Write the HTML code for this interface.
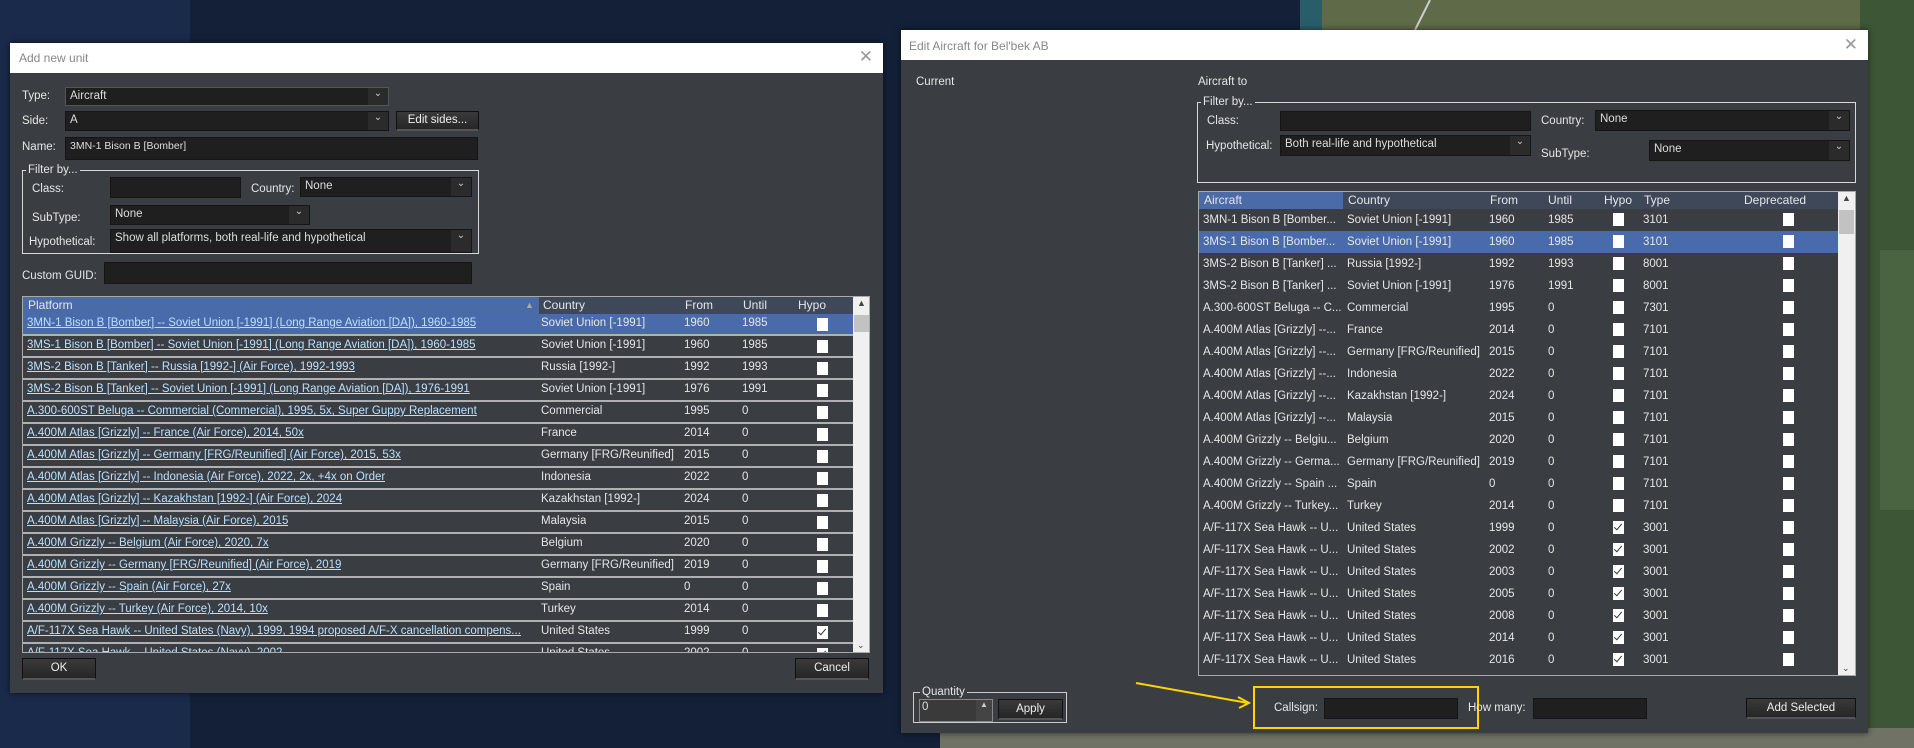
<!DOCTYPE html>
<html><head><meta charset="utf-8">
<style>
*{box-sizing:border-box;margin:0;padding:0}
body{width:1914px;height:748px;overflow:hidden;position:relative;font-family:"Liberation Sans",sans-serif;font-size:12px;color:#e6e6e6;background:#132038}
.a{position:absolute}
.dlg{position:absolute;background:#3a3d41;box-shadow:0 0 6px rgba(0,0,0,.6)}
.tb{position:absolute;left:0;top:0;right:0;background:#fff;color:#888;font-size:12px}
.fld{position:absolute;background:#1f1f1f;border:1px solid #151515;color:#ddd;padding:2px 4px;font-size:11.5px;white-space:nowrap;overflow:hidden}
.cmb .arr{position:absolute;right:0;top:0;bottom:0;width:20px;background:#2b2b2b;color:#ccc;font-size:10px;text-align:center}
.btn{position:absolute;background:linear-gradient(#3a3a3a,#262626);border:1px solid #111;border-bottom:2px solid #555;color:#eee;text-align:center;font-size:11.5px}
.grp{position:absolute;border:1px solid #d8d8d8}
.grp .lg{position:absolute;top:-8px;left:3px;background:#3a3d41;padding:0 2px;font-size:11.5px;line-height:14px}
.lbl{position:absolute;font-size:11.5px;white-space:nowrap}
.row{position:absolute;left:0;height:22px;line-height:22px;white-space:nowrap;font-size:11.5px}
.cell{position:absolute;top:0;overflow:hidden;white-space:nowrap}
.lt .row{border-bottom:2px solid #b0b0b0;line-height:19px}
.lt .c0{color:#b9e0ff;text-decoration:underline}
.cb{position:absolute;width:11px;height:13px;background:#fff}
.cb.k::after{content:"";position:absolute;left:3px;top:1px;width:3px;height:7px;border:solid #333;border-width:0 1.5px 1.5px 0;transform:rotate(40deg)}
.sel{background:#4a6bab}
.hdr{position:absolute;height:17px;line-height:17px;background:#3e4859;font-size:12px}
.sb{position:absolute;background:#f0f0f0}
</style></head><body>
<svg class="a" style="left:0;top:0" width="1914" height="748">
<rect width="1914" height="748" fill="#132038"/>
<rect width="190" height="748" fill="#1a2a4a"/>
<rect x="1320" y="0" width="594" height="40" fill="#5e6a48"/>
<rect x="1300" y="0" width="22" height="40" fill="#2a5d6a"/>
<rect x="1860" y="0" width="54" height="748" fill="#3d5636"/>
<rect x="1880" y="250" width="34" height="260" fill="#4a6340"/>
<rect x="940" y="728" width="974" height="20" fill="#6f7264"/>
<line x1="1430" y1="0" x2="1415" y2="30" stroke="#ccc" stroke-width="2"/>
</svg>

<!-- LEFT DIALOG -->
<div class="dlg" style="left:10px;top:43px;width:873px;height:650px">
 <div class="tb" style="height:30px"><span class="a" style="left:9px;top:8px">Add new unit</span><span class="a" style="right:10px;top:4px;font-size:17px;color:#999">✕</span></div>
</div>
<div class="lbl" style="left:22px;top:90px">Type:</div>
<div class="fld cmb" style="left:65px;top:87px;width:324px;height:19px;border:1px solid #555">Aircraft<span class="arr">⌄</span></div>
<div class="lbl" style="left:22px;top:115px">Side:</div>
<div class="fld cmb" style="left:65px;top:111px;width:324px;height:20px">A<span class="arr">⌄</span></div>
<div class="btn" style="left:396px;top:111px;width:83px;height:20px;line-height:17px">Edit sides...</div>
<div class="lbl" style="left:22px;top:141px">Name:</div>
<div class="fld" style="left:65px;top:137px;width:413px;height:23px;font-size:10.5px">3MN-1 Bison B [Bomber]</div>
<div class="grp" style="left:22px;top:170px;width:457px;height:84px"><span class="lg">Filter by...</span></div>
<div class="lbl" style="left:32px;top:183px">Class:</div>
<div class="fld" style="left:110px;top:177px;width:131px;height:21px"></div>
<div class="lbl" style="left:251px;top:183px">Country:</div>
<div class="fld cmb" style="left:300px;top:177px;width:172px;height:20px">None<span class="arr">⌄</span></div>
<div class="lbl" style="left:32px;top:212px">SubType:</div>
<div class="fld cmb" style="left:110px;top:205px;width:200px;height:20px">None<span class="arr">⌄</span></div>
<div class="lbl" style="left:29px;top:236px">Hypothetical:</div>
<div class="fld cmb" style="left:110px;top:229px;width:362px;height:24px">Show all platforms, both real-life and hypothetical<span class="arr">⌄</span></div>
<div class="lbl" style="left:22px;top:270px">Custom GUID:</div>
<div class="fld" style="left:104px;top:262px;width:368px;height:22px"></div>

<div class="a" style="left:22px;top:296px;width:848px;height:357px;border:1px solid #a9a9a9;overflow:hidden;background:#3a3d41">
 <div class="hdr" style="left:0;top:0;width:830px"><span class="a" style="left:0;width:516px;height:17px;background:#4a6aa8;padding-left:5px">Platform<span class="a" style="left:502px;color:#aaa;font-size:9px">▲</span></span><span class="a" style="left:520px">Country</span><span class="a" style="left:662px">From</span><span class="a" style="left:720px">Until</span><span class="a" style="left:775px">Hypo</span></div>
 <div class="lt a" style="left:0;top:17px;width:830px">
  <div class="row sel" style="top:0;width:830px"><span class="cell c0" style="left:4px">3MN-1 Bison B [Bomber] -- Soviet Union [-1991] (Long Range Aviation [DA]), 1960-1985</span><span class="cell" style="left:518px">Soviet Union [-1991]</span><span class="cell" style="left:661px">1960</span><span class="cell" style="left:719px">1985</span><span class="cb" style="left:794px;top:4px"></span></div>
  <div class="row" style="top:22px;width:830px"><span class="cell c0" style="left:4px">3MS-1 Bison B [Bomber] -- Soviet Union [-1991] (Long Range Aviation [DA]), 1960-1985</span><span class="cell" style="left:518px">Soviet Union [-1991]</span><span class="cell" style="left:661px">1960</span><span class="cell" style="left:719px">1985</span><span class="cb" style="left:794px;top:4px"></span></div>
  <div class="row" style="top:44px;width:830px"><span class="cell c0" style="left:4px">3MS-2 Bison B [Tanker] -- Russia [1992-] (Air Force), 1992-1993</span><span class="cell" style="left:518px">Russia [1992-]</span><span class="cell" style="left:661px">1992</span><span class="cell" style="left:719px">1993</span><span class="cb" style="left:794px;top:4px"></span></div>
  <div class="row" style="top:66px;width:830px"><span class="cell c0" style="left:4px">3MS-2 Bison B [Tanker] -- Soviet Union [-1991] (Long Range Aviation [DA]), 1976-1991</span><span class="cell" style="left:518px">Soviet Union [-1991]</span><span class="cell" style="left:661px">1976</span><span class="cell" style="left:719px">1991</span><span class="cb" style="left:794px;top:4px"></span></div>
  <div class="row" style="top:88px;width:830px"><span class="cell c0" style="left:4px">A.300-600ST Beluga -- Commercial (Commercial), 1995, 5x, Super Guppy Replacement</span><span class="cell" style="left:518px">Commercial</span><span class="cell" style="left:661px">1995</span><span class="cell" style="left:719px">0</span><span class="cb" style="left:794px;top:4px"></span></div>
  <div class="row" style="top:110px;width:830px"><span class="cell c0" style="left:4px">A.400M Atlas [Grizzly] -- France (Air Force), 2014, 50x</span><span class="cell" style="left:518px">France</span><span class="cell" style="left:661px">2014</span><span class="cell" style="left:719px">0</span><span class="cb" style="left:794px;top:4px"></span></div>
  <div class="row" style="top:132px;width:830px"><span class="cell c0" style="left:4px">A.400M Atlas [Grizzly] -- Germany [FRG/Reunified] (Air Force), 2015, 53x</span><span class="cell" style="left:518px">Germany [FRG/Reunified]</span><span class="cell" style="left:661px">2015</span><span class="cell" style="left:719px">0</span><span class="cb" style="left:794px;top:4px"></span></div>
  <div class="row" style="top:154px;width:830px"><span class="cell c0" style="left:4px">A.400M Atlas [Grizzly] -- Indonesia (Air Force), 2022, 2x, +4x on Order</span><span class="cell" style="left:518px">Indonesia</span><span class="cell" style="left:661px">2022</span><span class="cell" style="left:719px">0</span><span class="cb" style="left:794px;top:4px"></span></div>
  <div class="row" style="top:176px;width:830px"><span class="cell c0" style="left:4px">A.400M Atlas [Grizzly] -- Kazakhstan [1992-] (Air Force), 2024</span><span class="cell" style="left:518px">Kazakhstan [1992-]</span><span class="cell" style="left:661px">2024</span><span class="cell" style="left:719px">0</span><span class="cb" style="left:794px;top:4px"></span></div>
  <div class="row" style="top:198px;width:830px"><span class="cell c0" style="left:4px">A.400M Atlas [Grizzly] -- Malaysia (Air Force), 2015</span><span class="cell" style="left:518px">Malaysia</span><span class="cell" style="left:661px">2015</span><span class="cell" style="left:719px">0</span><span class="cb" style="left:794px;top:4px"></span></div>
  <div class="row" style="top:220px;width:830px"><span class="cell c0" style="left:4px">A.400M Grizzly -- Belgium (Air Force), 2020, 7x</span><span class="cell" style="left:518px">Belgium</span><span class="cell" style="left:661px">2020</span><span class="cell" style="left:719px">0</span><span class="cb" style="left:794px;top:4px"></span></div>
  <div class="row" style="top:242px;width:830px"><span class="cell c0" style="left:4px">A.400M Grizzly -- Germany [FRG/Reunified] (Air Force), 2019</span><span class="cell" style="left:518px">Germany [FRG/Reunified]</span><span class="cell" style="left:661px">2019</span><span class="cell" style="left:719px">0</span><span class="cb" style="left:794px;top:4px"></span></div>
  <div class="row" style="top:264px;width:830px"><span class="cell c0" style="left:4px">A.400M Grizzly -- Spain (Air Force), 27x</span><span class="cell" style="left:518px">Spain</span><span class="cell" style="left:661px">0</span><span class="cell" style="left:719px">0</span><span class="cb" style="left:794px;top:4px"></span></div>
  <div class="row" style="top:286px;width:830px"><span class="cell c0" style="left:4px">A.400M Grizzly -- Turkey (Air Force), 2014, 10x</span><span class="cell" style="left:518px">Turkey</span><span class="cell" style="left:661px">2014</span><span class="cell" style="left:719px">0</span><span class="cb" style="left:794px;top:4px"></span></div>
  <div class="row" style="top:308px;width:830px"><span class="cell c0" style="left:4px">A/F-117X Sea Hawk -- United States (Navy), 1999, 1994 proposed A/F-X cancellation compens...</span><span class="cell" style="left:518px">United States</span><span class="cell" style="left:661px">1999</span><span class="cell" style="left:719px">0</span><span class="cb k" style="left:794px;top:4px"></span></div>
  <div class="row" style="top:330px;width:830px"><span class="cell c0" style="left:4px">A/F-117X Sea Hawk -- United States (Navy), 2002</span><span class="cell" style="left:518px">United States</span><span class="cell" style="left:661px">2002</span><span class="cell" style="left:719px">0</span><span class="cb k" style="left:794px;top:4px"></span></div>
 </div>
 <div class="sb" style="left:830px;top:0;width:17px;height:356px"><span class="a" style="left:4px;top:1px;font-size:9px;color:#444">▲</span><div class="a" style="left:1px;top:18px;width:15px;height:17px;background:#c2c2c2"></div><span class="a" style="left:4px;bottom:2px;font-size:9px;color:#444">⌄</span></div>
</div>
<div class="btn" style="left:22px;top:658px;width:74px;height:22px;line-height:19px">OK</div>
<div class="btn" style="left:795px;top:658px;width:74px;height:22px;line-height:19px">Cancel</div>

<!-- RIGHT DIALOG -->
<div class="dlg" style="left:901px;top:30px;width:967px;height:703px">
 <div class="tb" style="height:30px"><span class="a" style="left:8px;top:9px">Edit Aircraft for Bel'bek AB</span><span class="a" style="right:10px;top:5px;font-size:17px;color:#999">✕</span></div>
</div>
<div class="lbl" style="left:916px;top:76px">Current</div>
<div class="lbl" style="left:1198px;top:76px">Aircraft to</div>
<div class="grp" style="left:1197px;top:102px;width:659px;height:81px"><span class="lg">Filter by...</span></div>
<div class="lbl" style="left:1207px;top:115px">Class:</div>
<div class="fld" style="left:1280px;top:111px;width:251px;height:20px"></div>
<div class="lbl" style="left:1541px;top:115px">Country:</div>
<div class="fld cmb" style="left:1595px;top:110px;width:255px;height:21px">None<span class="arr">⌄</span></div>
<div class="lbl" style="left:1206px;top:140px">Hypothetical:</div>
<div class="fld cmb" style="left:1280px;top:135px;width:251px;height:21px">Both real-life and hypothetical<span class="arr">⌄</span></div>
<div class="lbl" style="left:1541px;top:148px">SubType:</div>
<div class="fld cmb" style="left:1649px;top:140px;width:201px;height:21px">None<span class="arr">⌄</span></div>

<div class="a" style="left:1198px;top:191px;width:658px;height:485px;border:1px solid #a9a9a9;overflow:hidden;background:#3a3d41">
 <div class="hdr" style="left:0;top:0;width:639px"><span class="a" style="left:0;width:144px;height:17px;background:#4a6aa8;padding-left:5px">Aircraft</span><span class="a" style="left:149px">Country</span><span class="a" style="left:291px">From</span><span class="a" style="left:349px">Until</span><span class="a" style="left:405px">Hypo</span><span class="a" style="left:445px">Type</span><span class="a" style="left:545px">Deprecated</span></div>
 <div class="a" style="left:0;top:17px;width:639px" id="rt">
 </div>
 <div class="sb" style="left:639px;top:0;width:17px;height:484px"><span class="a" style="left:4px;top:1px;font-size:9px;color:#444">▲</span><div class="a" style="left:1px;top:18px;width:15px;height:24px;background:#c2c2c2"></div><span class="a" style="left:4px;bottom:2px;font-size:9px;color:#444">⌄</span></div>
</div>

<div class="grp" style="left:913px;top:692px;width:154px;height:31px;border-color:#ccc"><span class="lg" style="top:-8px;left:6px">Quantity</span></div>
<div class="fld" style="left:919px;top:699px;width:74px;height:23px;background:#3a3a3a;border:1px solid #888;padding:1px 2px">0<span class="a" style="right:0;top:0;width:16px;height:21px;background:#444;color:#ccc;font-size:8px;text-align:center">▲</span></div>
<div class="btn" style="left:998px;top:699px;width:65px;height:21px;line-height:18px">Apply</div>

<div class="a" style="left:1253px;top:686px;width:226px;height:43px;border:2px solid #ffd400"></div>
<svg class="a" style="left:1130px;top:678px" width="125" height="32"><line x1="6" y1="5" x2="118" y2="25" stroke="#ffd400" stroke-width="2"/><polyline points="108,19 119,25 109,30" fill="none" stroke="#ffd400" stroke-width="2"/></svg>
<div class="lbl" style="left:1274px;top:702px">Callsign:</div>
<div class="fld" style="left:1324px;top:698px;width:134px;height:21px"></div>
<div class="lbl" style="left:1468px;top:702px">How many:</div>
<div class="fld" style="left:1533px;top:698px;width:114px;height:21px"></div>
<div class="btn" style="left:1746px;top:698px;width:110px;height:21px;line-height:18px">Add Selected</div>

<script>
var d=[["3MN-1 Bison B [Bomber...","Soviet Union [-1991]","1960","1985",0,"3101"],
["3MS-1 Bison B [Bomber...","Soviet Union [-1991]","1960","1985",0,"3101"],
["3MS-2 Bison B [Tanker] ...","Russia [1992-]","1992","1993",0,"8001"],
["3MS-2 Bison B [Tanker] ...","Soviet Union [-1991]","1976","1991",0,"8001"],
["A.300-600ST Beluga -- C...","Commercial","1995","0",0,"7301"],
["A.400M Atlas [Grizzly] --...","France","2014","0",0,"7101"],
["A.400M Atlas [Grizzly] --...","Germany [FRG/Reunified]","2015","0",0,"7101"],
["A.400M Atlas [Grizzly] --...","Indonesia","2022","0",0,"7101"],
["A.400M Atlas [Grizzly] --...","Kazakhstan [1992-]","2024","0",0,"7101"],
["A.400M Atlas [Grizzly] --...","Malaysia","2015","0",0,"7101"],
["A.400M Grizzly -- Belgiu...","Belgium","2020","0",0,"7101"],
["A.400M Grizzly -- Germa...","Germany [FRG/Reunified]","2019","0",0,"7101"],
["A.400M Grizzly -- Spain ...","Spain","0","0",0,"7101"],
["A.400M Grizzly -- Turkey...","Turkey","2014","0",0,"7101"]];
["1999","2002","2003","2005","2008","2014","2016","2018"].forEach(function(y){d.push(["A/F-117X Sea Hawk -- U...","United States",y,"0",1,"3001"])});
var h="";d.forEach(function(r,i){h+='<div class="row'+(i==1?' sel':'')+'" style="top:'+(i*22)+'px;width:639px"><span class="cell" style="left:4px;width:140px">'+r[0]+'</span><span class="cell" style="left:148px">'+r[1]+'</span><span class="cell" style="left:290px">'+r[2]+'</span><span class="cell" style="left:349px">'+r[3]+'</span><span class="cb'+(r[4]?' k':'')+'" style="left:414px;top:4px"></span><span class="cell" style="left:444px">'+r[5]+'</span><span class="cb" style="left:584px;top:4px"></span></div>'});
document.getElementById("rt").innerHTML=h;
</script>
</body></html>
